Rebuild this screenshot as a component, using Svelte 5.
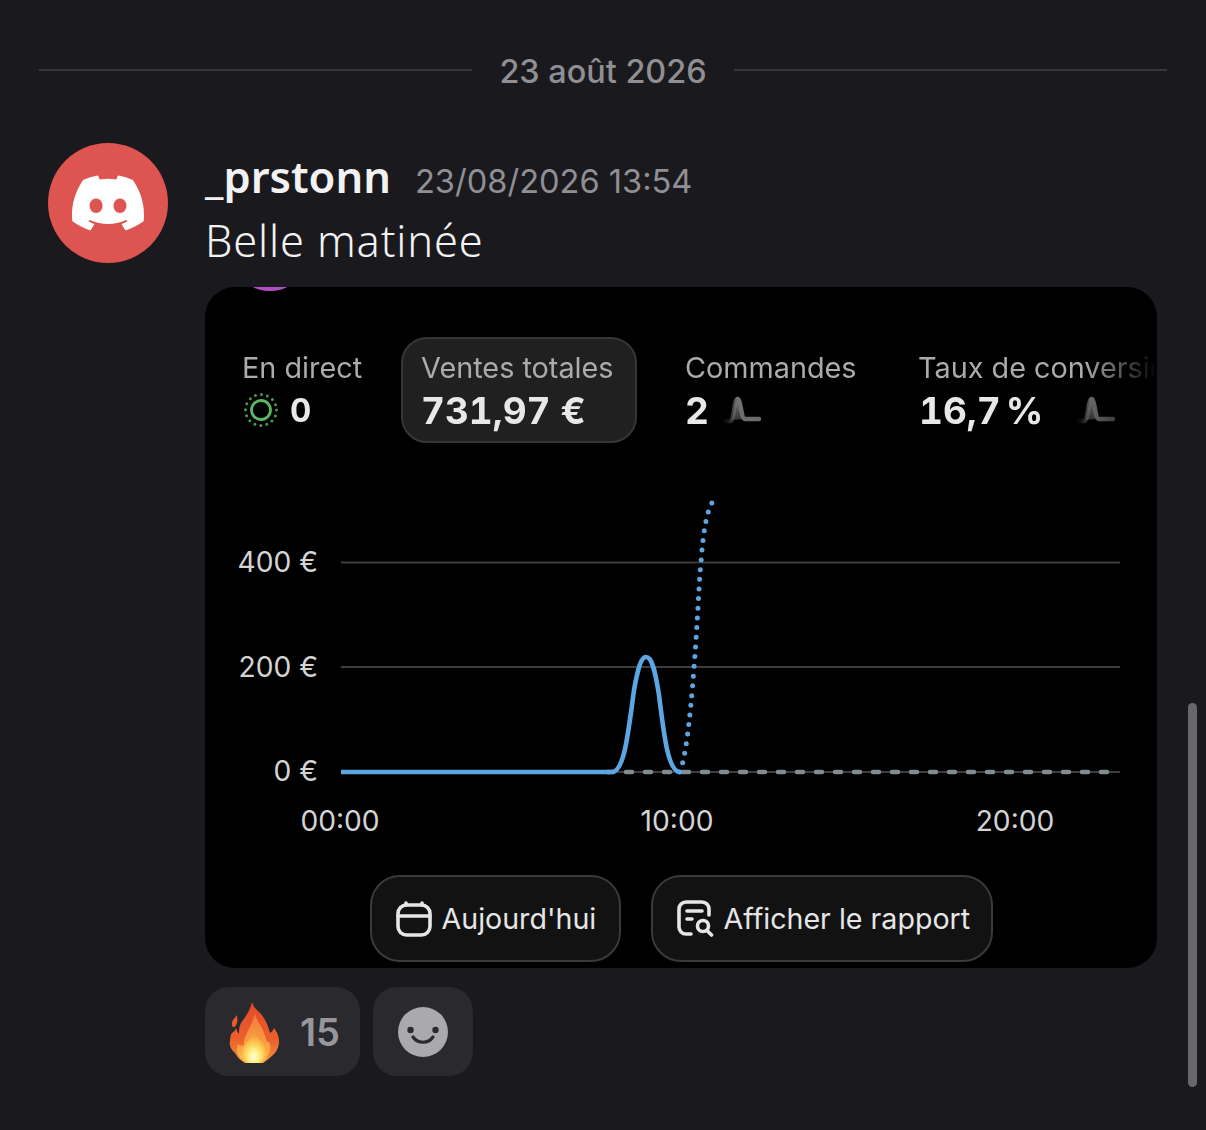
<script>
  const grid = [562.5, 667, 772];
  const yLabels = [
    { y: 572, t: '400 €' },
    { y: 677, t: '200 €' },
    { y: 781, t: '0 €' }
  ];
  const xLabels = [
    { x: 340, t: '00:00' },
    { x: 677, t: '10:00' },
    { x: 1015, t: '20:00' }
  ];
</script>

<div class="page">
  <div class="date">
    <span class="rule"></span>
    <span class="date-text">23 août 2026</span>
    <span class="rule"></span>
  </div>

  <div class="message">
    <div class="avatar">
      <svg viewBox="0 0 24 24" width="72" height="72" aria-hidden="true">
        <path fill="#fff" d="M20.317 4.3698a19.7913 19.7913 0 00-4.8851-1.5152.0741.0741 0 00-.0785.0371c-.211.3753-.4447.8648-.6083 1.2495-1.8447-.2762-3.68-.2762-5.4868 0-.1636-.3933-.4058-.8742-.6177-1.2495a.077.077 0 00-.0785-.037 19.7363 19.7363 0 00-4.8852 1.515.0699.0699 0 00-.0321.0277C.5334 9.0458-.319 13.5799.0992 18.0578a.0824.0824 0 00.0312.0561c2.0528 1.5076 4.0413 2.4228 5.9929 3.0294a.0777.0777 0 00.0842-.0276c.4616-.6304.8731-1.2952 1.226-1.9942a.076.076 0 00-.0416-.1057c-.6528-.2476-1.2743-.5495-1.8722-.8923a.077.077 0 01-.0076-.1277c.1258-.0943.2517-.1923.3718-.2914a.0743.0743 0 01.0776-.0105c3.9278 1.7933 8.18 1.7933 12.0614 0a.0739.0739 0 01.0785.0095c.1202.099.246.1981.3728.2924a.077.077 0 01-.0066.1276 12.2986 12.2986 0 01-1.873.8914.0766.0766 0 00-.0407.1067c.3604.698.7719 1.3628 1.225 1.9932a.076.076 0 00.0842.0286c1.961-.6067 3.9495-1.5219 6.0023-3.0294a.077.077 0 00.0313-.0552c.5004-5.177-.8382-9.6739-3.5485-13.6604a.061.061 0 00-.0312-.0286zM8.02 15.3312c-1.1825 0-2.1569-1.0857-2.1569-2.419 0-1.3332.9555-2.4189 2.157-2.4189 1.2108 0 2.1757 1.0952 2.1568 2.419 0 1.3332-.9555 2.4189-2.1569 2.4189zm7.9748 0c-1.1825 0-2.1569-1.0857-2.1569-2.419 0-1.3332.9554-2.4189 2.1569-2.4189 1.2108 0 2.1757 1.0952 2.1568 2.419 0 1.3332-.946 2.4189-2.1568 2.4189Z"/>
      </svg>
    </div>

    <div class="body">
      <div class="head">
        <span class="name">_prstonn</span>
        <span class="time">23/08/2026 13:54</span>
      </div>
      <div class="text">Belle matinée</div>

      <div class="card">
        <span class="blob"></span>

        <div class="stats">
          <div class="stat live">
            <div class="label">En direct</div>
            <div class="value small">
              <svg viewBox="0 0 36 36" width="36" height="36" aria-hidden="true">
                <circle cx="18" cy="18" r="9.5" fill="none" stroke="#5cb765" stroke-width="2.8"/>
                <circle cx="18" cy="18" r="15.5" fill="none" stroke="#4d9a55" stroke-width="3" stroke-linecap="round" stroke-dasharray="0 6.087"/>
              </svg>
              <span>0</span>
            </div>
          </div>

          <div class="stat pill">
            <div class="label">Ventes totales</div>
            <div class="value">731,97 €</div>
          </div>

          <div class="stat orders">
            <div class="label">Commandes</div>
            <div class="value">2
              <svg class="spark" viewBox="0 0 38 28" width="38" height="28" aria-hidden="true">
                <defs>
                  <linearGradient id="sp1" x1="0" x2="1" y1="0" y2="0">
                    <stop offset="0" stop-color="#333" stop-opacity=".15"/>
                    <stop offset=".35" stop-color="#707070"/>
                    <stop offset="1" stop-color="#6a6a6a"/>
                  </linearGradient>
                  <linearGradient id="sp2" x1="0" x2="0" y1="0" y2="1">
                    <stop offset="0" stop-color="#777"/>
                    <stop offset="1" stop-color="#333"/>
                  </linearGradient>
                </defs>
                <path d="M8 24 C11 20 11 3 14.5 3 C18 3 18 20 21 23 Z" fill="url(#sp2)"/>
                <path d="M2 25 H7 C11 25 11 3 14.5 3 C18 3 18 23 22 23 H36" fill="none" stroke="url(#sp1)" stroke-width="4.4" stroke-linecap="round"/>
              </svg>
            </div>
          </div>

          <div class="stat rate">
            <div class="label">Taux de conversion</div>
            <div class="value">16,7 %
              <svg class="spark far" viewBox="0 0 38 28" width="38" height="28" aria-hidden="true">
                <path d="M8 24 C11 20 11 3 14.5 3 C18 3 18 20 21 23 Z" fill="url(#sp2)"/>
                <path d="M2 25 H7 C11 25 11 3 14.5 3 C18 3 18 23 22 23 H36" fill="none" stroke="url(#sp1)" stroke-width="4.4" stroke-linecap="round"/>
              </svg>
            </div>
          </div>
        </div>

        <svg class="chart" viewBox="205 480 952 370" width="952" height="370" aria-label="Graphique des ventes">
          {#each grid as y}
            <line x1="341" x2="1120" y1={y} y2={y} stroke="#3d3d3d" stroke-width="2"/>
          {/each}
          {#each yLabels as l}
            <text class="tick" x="318" y={l.y} text-anchor="end">{l.t}</text>
          {/each}
          {#each xLabels as l}
            <text class="tick" x={l.x} y="831" text-anchor="middle">{l.t}</text>
          {/each}
          <line x1="607" x2="1112" y1="772" y2="772" stroke="#818b90" stroke-width="4.6" stroke-linecap="round" stroke-dasharray="6 13"/>
          <path d="M680 772 C686 755 690 720 694 668 S699 580 701 562 C703 535 706 512 713 501" fill="none" stroke="#5ba6e3" stroke-width="5" stroke-linecap="round" stroke-dasharray="0 9.7"/>
          <path d="M341 772 H612 C624 772 628 735 634 690 C638 668 641 657 646 657 C652 657 655 670 659 695 C664 735 668 772 680 772" fill="none" stroke="#5ba6e3" stroke-width="4.6"/>
        </svg>

        <div class="actions">
          <div class="btn today">
            <svg viewBox="0 0 36 36" width="36" height="36" aria-hidden="true" fill="none" stroke="#e6e6e6" stroke-width="3.6" stroke-linecap="round" stroke-linejoin="round">
              <rect x="2" y="4" width="32" height="30" rx="8.5"/>
              <path d="M2 15 H34 M10 2 V4 M26 2 V4"/>
            </svg>
            <span>Aujourd'hui</span>
          </div>
          <div class="btn report">
            <svg viewBox="0 0 37 37" width="37" height="37" aria-hidden="true" fill="none" stroke="#e6e6e6" stroke-width="3.6" stroke-linecap="round" stroke-linejoin="round">
              <path d="M14 34 H9 A7 7 0 0 1 2 27 V9 A7 7 0 0 1 9 2 H25 A7 7 0 0 1 32 9 V15"/>
              <path d="M10 11 H25 M10 19 H15"/>
              <circle cx="26" cy="26" r="5.5"/>
              <path d="M30.5 31 L34.5 35"/>
            </svg>
            <span>Afficher le rapport</span>
          </div>
        </div>
      </div>

      <div class="reactions">
        <div class="reaction fire">
          <svg viewBox="0 0 52 62" width="52" height="62" aria-hidden="true">
            <defs>
              <linearGradient id="fl" x1="0" x2="0" y1="0" y2="1">
                <stop offset="0" stop-color="#e2492a"/>
                <stop offset=".6" stop-color="#ec5f2c"/>
                <stop offset="1" stop-color="#f6913a"/>
              </linearGradient>
              <linearGradient id="fm" x1="0" x2="0" y1="0" y2="1">
                <stop offset="0" stop-color="#f2793a"/>
                <stop offset=".7" stop-color="#f9a544"/>
                <stop offset="1" stop-color="#fcc250"/>
              </linearGradient>
              <radialGradient id="fc" cx=".5" cy=".82" r=".62">
                <stop offset="0" stop-color="#fffde0"/>
                <stop offset=".35" stop-color="#ffee80"/>
                <stop offset=".75" stop-color="#fcc04a"/>
                <stop offset="1" stop-color="#f9a83c" stop-opacity=".4"/>
              </radialGradient>
            </defs>
            <path fill="url(#fl)" d="M24 1 C25 6 29 9 33 13 C37 18 40 24 42 32 C44 31 45 29 46 27 C49 31 51 35 51 40 C51 46 49 50 45 54 C42 57 39 59 35 62 H17 C12 59 9 56 7 52 C3 48 1 45 2 40 C2 36 3 33 4 32 C6 31 7 29 8 27 C9 30 10 32 11 33 C11 29 11 26 13 22 C16 17 22 11 24 1 Z"/>
            <path fill="#e65a2e" d="M9 14 C9 17 10 20 9 22 C8 25 6 27 5 26 C3 24 4 21 5 19 C6 17 8 16 9 14 Z"/>
            <path fill="url(#fm)" d="M27 12 C28 20 35 26 37 35 C38 39 39 42 41 41 C44 46 42 55 34 62 H18 C10 57 7 50 10 43 C12 45 14 45 16 44 C15 35 24 26 27 12 Z"/>
            <path fill="url(#fc)" d="M26 28 C28 36 38 42 38 51 C38 56 34 60 31 62 H21 C17 60 13 56 14 50 C15 44 24 38 26 28 Z"/>
          </svg>
          <span class="count">15</span>
        </div>
        <div class="reaction add">
          <svg viewBox="0 0 50 50" width="50" height="50" aria-hidden="true">
            <circle cx="25" cy="25" r="25" fill="#a9a9ae"/>
            <circle cx="12.5" cy="23" r="3.2" fill="#2a2a2f"/>
            <circle cx="37.5" cy="23" r="3.2" fill="#2a2a2f"/>
            <path d="M15 30 C20 37 30 37 35 30" fill="none" stroke="#2a2a2f" stroke-width="3.2" stroke-linecap="round"/>
          </svg>
        </div>
      </div>
    </div>
  </div>

  <span class="scrollbar"></span>
</div>

<style>
  :global(body) {
    margin: 0;
    background: #1a1a1e;
  }
  .page {
    position: relative;
    height: 1130px;
    box-sizing: border-box;
    padding-top: 50px;
    overflow: hidden;
    font-family: Inter, "Liberation Sans", sans-serif;
    color: #f2f2f3;
  }
  .date {
    display: flex;
    align-items: center;
    gap: 27px;
    padding: 0 39px;
    height: 40px;
  }
  .rule {
    flex: 1;
    height: 2px;
    background: #37373b;
  }
  .date-text {
    padding-top: 2px;
    font-size: 32.4px;
    font-weight: 500;
    color: #8f8f94;
    white-space: nowrap;
  }
  .message {
    display: flex;
    gap: 37px;
    margin-top: 53px;
    padding-left: 48px;
    padding-right: 49px;
  }
  .avatar {
    flex: none;
    width: 120px;
    height: 120px;
    border-radius: 50%;
    background: #dd5450;
    display: flex;
    align-items: center;
    justify-content: center;
  }
  .body {
    flex: 1;
    min-width: 0;
  }
  .head {
    display: flex;
    align-items: baseline;
    gap: 24px;
    height: 68px;
  }
  .name {
    font-family: "Noto Sans", sans-serif;
    font-size: 43.5px;
    font-weight: 600;
    line-height: 66px;
    color: #f2f2f3;
  }
  .time {
    font-size: 32.6px;
    color: #8f8f94;
  }
  .text {
    font-family: "Noto Sans", sans-serif;
    font-size: 43.4px;
    font-weight: 300;
    letter-spacing: 0.85px;
    line-height: 52px;
    color: #f2f2f3;
    margin-top: 4px;
    height: 52px;
    white-space: nowrap;
  }
  .card {
    position: relative;
    overflow: hidden;
    height: 681px;
    margin-top: 20px;
    border-radius: 30px;
    background: #000;
  }
  .blob {
    position: absolute;
    left: 38px;
    top: -30px;
    width: 54px;
    height: 34px;
    border-radius: 50%;
    background: #b04fc4;
  }
  .stats {
    display: flex;
    align-items: flex-start;
    margin-top: 50px;
    height: 106px;
    padding-left: 37px;
    white-space: nowrap;
    overflow: hidden;
    -webkit-mask-image: linear-gradient(to right, #000 880px, transparent 952px);
    mask-image: linear-gradient(to right, #000 880px, transparent 952px);
  }
  .stat {
    flex: none;
    box-sizing: border-box;
  }
  .label {
    font-size: 28.8px;
    line-height: 36px;
    color: #ababab;
  }
  .live {
    padding-top: 13px;
    width: 159px;
  }
  .pill {
    width: 236px;
    height: 106px;
    padding: 11px 0 0 18px;
    border: 2px solid #363636;
    border-radius: 26px;
    background: #202020;
  }
  .pill .value {
    margin-top: 1px;
  }
  .orders {
    margin-left: 48px;
    width: 233px;
    padding-top: 13px;
  }
  .rate {
    padding-top: 13px;
  }
  .value {
    display: flex;
    align-items: center;
    height: 46px;
    font-size: 37px;
    font-weight: 700;
    font-variant-numeric: tabular-nums;
    color: #e8e8e8;
  }
  .orders .value,
  .rate .value,
  .live .value {
    margin-top: 1px;
  }
  .rate .value {
    margin-left: 1px;
    word-spacing: -5px;
  }
  .value.small {
    font-size: 33px;
    gap: 11px;
    margin-left: 1px;
  }
  .spark {
    margin-left: 14px;
  }
  .spark.far {
    margin-left: 34px;
  }
  .chart {
    display: block;
    margin-top: 37px;
  }
  .tick {
    font-size: 28.2px;
    fill: #d4d4d4;
  }
  .actions {
    display: flex;
    justify-content: center;
    gap: 30px;
    margin-top: 25px;
  }
  .btn {
    box-sizing: border-box;
    flex: none;
    display: flex;
    align-items: center;
    gap: 10px;
    height: 87px;
    padding-left: 24px;
    border: 2px solid #3a3a3a;
    border-radius: 30px;
    background: #121212;
    font-size: 28.6px;
    white-space: nowrap;
    color: #e6e6e6;
  }
  .today {
    width: 251px;
  }
  .report {
    width: 342px;
  }
  .reactions {
    display: flex;
    gap: 13px;
    margin-top: 19px;
  }
  .reaction {
    box-sizing: border-box;
    display: flex;
    align-items: center;
    height: 89px;
    border-radius: 24px;
    background: #29292e;
  }
  .fire {
    gap: 20px;
    width: 155px;
    padding-left: 23px;
  }
  .count {
    font-size: 38px;
    font-weight: 600;
    color: #96969b;
  }
  .add {
    width: 100px;
    justify-content: center;
  }
  .scrollbar {
    position: absolute;
    left: 1188px;
    top: 703px;
    width: 9px;
    height: 384px;
    border-radius: 5px;
    background: #68686c;
  }
</style>
